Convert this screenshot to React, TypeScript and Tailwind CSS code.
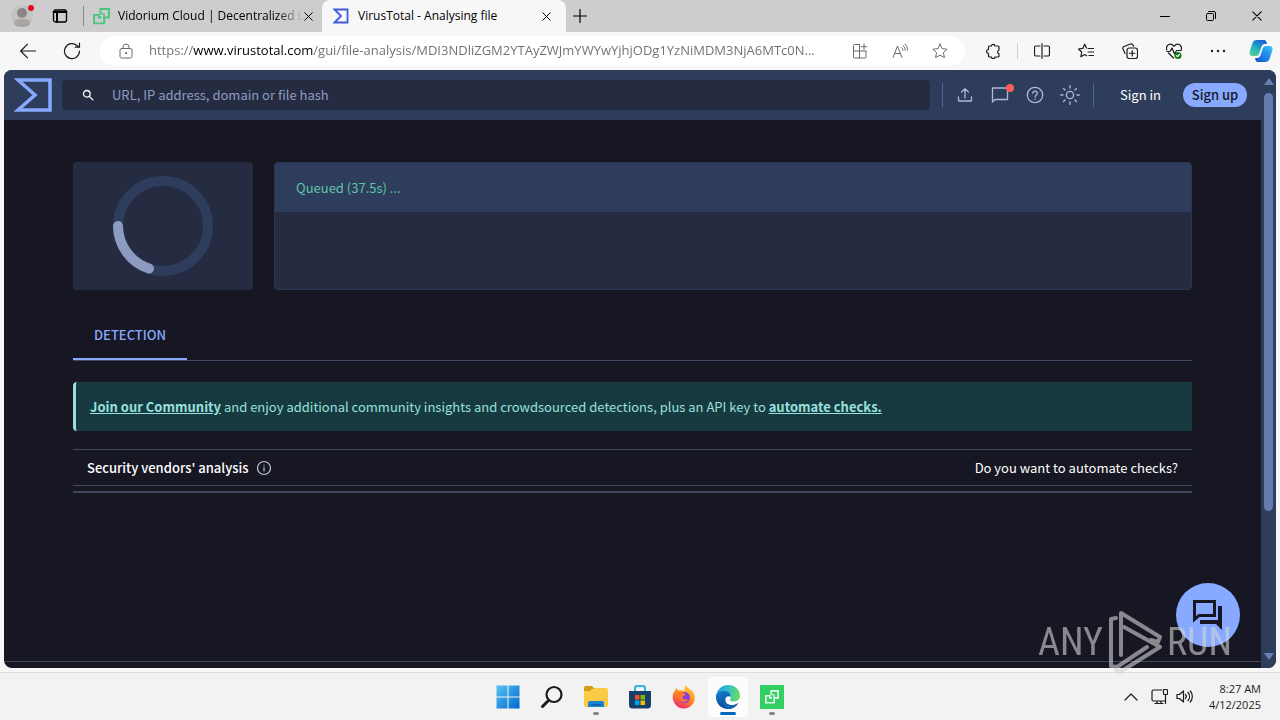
import { useState } from 'react'
import type { ReactNode } from 'react'

const ADDRESS =
  'https://www.virustotal.com/gui/file-analysis/MDI3NDliZGM2YTAyZWJmYWYwYjhjODg1YzNiMDM3NjA6MTc0N...'

type IconProps = { size?: number; box?: number; width?: number; className?: string; children: ReactNode }

function Icon({ size = 16, box = 16, width = 1, className = '', children }: IconProps) {
  return (
    <svg
      width={size}
      height={size}
      viewBox={`0 0 ${box} ${box}`}
      fill="none"
      stroke="currentColor"
      strokeWidth={width}
      strokeLinecap="round"
      strokeLinejoin="round"
      className={`shrink-0 ${className}`}
      aria-hidden="true"
    >
      {children}
    </svg>
  )
}

function CloseIcon({ size = 10 }: { size?: number }) {
  return (
    <Icon size={size} box={10} width={1.1}>
      <path d="M.8.8l8.4 8.4M9.2.8L.8 9.2" />
    </Icon>
  )
}

function VidoriumMark({ size, className }: { size: number; className: string }) {
  return (
    <svg width={size} height={size} viewBox="0 0 16 16" fill="none" stroke="currentColor" strokeWidth="1.800" className={`shrink-0 ${className}`} aria-hidden="true">
      <path d="M7 5.500V1h8v8h-4.500v5.500H1v-8h4.500V9H8" />
      <path d="M7 5.500h3.500V9" strokeWidth="1.200" />
    </svg>
  )
}

function TabStrip() {
  return (
    <div className="flex h-8 bg-[#cdcdcd] text-xs text-black">
      <button aria-label="Profile" className="flex w-11 items-center justify-center">
        <svg width="24" height="24" viewBox="0 0 24 24" aria-hidden="true">
          <circle cx="12" cy="12" r="11" fill="#c3c3c3" />
          <circle cx="12" cy="9" r="5" fill="#8b8683" />
          <path d="M4 19c0-3 3-4 8-4s8 1 8 4-4 4-8 4-8-1-8-4z" fill="#aaa5a2" />
          <circle cx="21" cy="4" r="3" fill="#e00b1c" />
        </svg>
      </button>
      <button aria-label="Tab actions" className="flex w-8 items-center justify-center">
        <Icon width={1.300}>
          <rect x="1.500" y="2" width="13" height="12" rx="2" />
          <path d="M1.500 4h13M5 4.500V14" strokeWidth="2" />
        </Icon>
      </button>
      <div className="ml-[7px] flex w-[239px] items-center bg-[linear-gradient(#888,#888)] bg-[length:1px_20px] bg-left bg-no-repeat pr-2.5 pl-2.5">
        <VidoriumMark size={17} className="text-[#48c67f]" />
        <span className="ml-2 whitespace-nowrap font-['Open_Sans',sans-serif] [mask-image:linear-gradient(to_right,black_85%,transparent)]">
          Vidorium Cloud | Decentralized L
        </span>
        <button aria-label="Close tab" className="ml-auto"><CloseIcon size={9} /></button>
      </div>
      <div className="flex w-[244px] items-center rounded-t-lg bg-[#f7f7f7] pr-[15px] pl-[11px]">
        <svg width="16" height="16" viewBox="0 0 16 16" fill="none" stroke="#3b5bdb" strokeWidth="1.800" className="shrink-0" aria-hidden="true">
          <path d="M1.500 1.500h13v13h-13L8 8z" />
        </svg>
        <span className="ml-[9px] flex-1 whitespace-nowrap font-['Open_Sans',sans-serif]">VirusTotal - Analysing file</span>
        <button aria-label="Close tab"><CloseIcon size={9} /></button>
      </div>
      <button aria-label="New tab" className="flex w-7 items-center justify-center">
        <Icon size={14} box={14} width={1.200}><path d="M7 .5v13M.5 7h13" /></Icon>
      </button>
      <div className="ml-auto flex">
        <button aria-label="Minimize" className="flex w-[46px] items-center justify-center">
          <Icon size={10} box={10}><path d="M0 5.500h10" /></Icon>
        </button>
        <button aria-label="Restore" className="flex w-[46px] items-center justify-center">
          <Icon size={10} box={10}>
            <rect x=".5" y="2.500" width="7" height="7" rx="1" />
            <path d="M2.500.5H8A1.500 1.500 0 0 1 9.500 2v5.500" />
          </Icon>
        </button>
        <button aria-label="Close" className="flex w-[46px] items-center justify-center"><CloseIcon /></button>
      </div>
    </div>
  )
}

function Toolbar() {
  const [address, setAddress] = useState(ADDRESS)
  return (
    <div className="flex h-[38px] items-center text-[#1b1b1b]">
      <button aria-label="Back" className="ml-1 flex w-12 justify-center">
        <Icon width={1.200}><path d="M15.500 8H.7M7.500 1.200L.7 8l6.800 6.800" /></Icon>
      </button>
      <button aria-label="Refresh" className="flex w-10 justify-center">
        <Icon size={18} box={18} width={1.200}>
          <path d="M16.500 9A7.500 7.500 0 1 1 14 3.500l2 1.500M16.500 1v4.200h-4.200" />
        </Icon>
      </button>
      <div className="ml-2 flex h-[30px] flex-1 items-center rounded-full bg-white pl-[18px] text-[#6b6b6b]">
        <Icon>
          <rect x="2" y="5.500" width="12" height="9.500" rx="1.500" />
          <path d="M5 5.500V4a3 3 0 0 1 6 0v1.500" />
          <circle cx="8" cy="10" r=".6" fill="currentColor" />
        </Icon>
        <input
          aria-label="Address"
          value={address}
          onChange={(e) => setAddress(e.target.value)}
          className="ml-[15px] min-w-0 flex-1 bg-[linear-gradient(to_right,#6e6e6e_44px,#000_44px,#000_164px,#6e6e6e_164px)] bg-clip-text font-['Open_Sans',sans-serif] text-[13px] text-transparent caret-black outline-none"
        />
        <button aria-label="Install app" className="flex w-10 justify-center">
          <Icon>
            <path d="M7.500 1.500h-5a1 1 0 0 0-1 1V14a1 1 0 0 0 1 1H13a1 1 0 0 0 1-1V8.500M7.500 1.500V15M1.500 8H14M12 1v5.500M9.300 3.700h5.500" />
          </Icon>
        </button>
        <button aria-label="Read aloud" className="flex w-10 justify-center">
          <Icon><path d="M1 14.500L5.500 3l4.500 11.500M2.600 10.500h5.800M9.500 4.500c1 .8 1.300 1.800 1.300 3M11 2.500c1.600 1.200 2.200 2.900 2.200 4.800M12.800 1c1.800 1.500 2.700 3.500 2.700 6" /></Icon>
        </button>
        <button aria-label="Add to favourites" className="mr-[5px] flex w-10 justify-center">
          <Icon><path d="M8 1l2.100 4.600 5 .6-3.700 3.400 1 5L8 12.100l-4.400 2.500 1-5L.9 6.200l5-.6z" /></Icon>
        </button>
      </div>
      <button aria-label="Extensions" className="ml-2 flex w-10 justify-center">
        <Icon width={1.200}>
          <path d="M4.500 3h2a1.700 1.700 0 0 1 3.400 0H13a1 1 0 0 1 1 1v3a2 2 0 0 0 0 3.800V13a1 1 0 0 1-1 1H9.900a1.700 1.700 0 0 1-3.400 0h-2a1 1 0 0 1-1-1v-2.500a2 2 0 0 1 0-4V4a1 1 0 0 1 1-1z" />
        </Icon>
      </button>
      <span className="ml-1 h-4 w-px bg-[#cfcfcf]" />
      <div className="ml-1 flex items-center gap-1">
        <button aria-label="Split screen" className="flex w-10 justify-center">
          <Icon width={1.200}>
            <path d="M6 3H2a1.500 1.500 0 0 0-1.500 1.500v7A1.500 1.500 0 0 0 2 13h4M10 3h4a1.500 1.500 0 0 1 1.500 1.500v7A1.500 1.500 0 0 1 14 13h-4M8 .7v14.600" />
          </Icon>
        </button>
        <button aria-label="Favourites" className="flex w-10 justify-center">
          <Icon width={1.200}>
            <path d="M8.500 5L6.700 1.200 4.800 5.400l-4.300.6 3.200 3-.8 4.800 3.800-2.300 2 1.200M10 5.500h6M10 9h6M11 12.500h5" />
          </Icon>
        </button>
        <button aria-label="Collections" className="flex w-10 justify-center">
          <Icon width={1.200}>
            <path d="M3 10.500L1 6a2 2 0 0 1 1-2.500L8.500 1A2 2 0 0 1 11 2l.6 1.200" />
            <rect x="5" y="5" width="10.500" height="10.500" rx="2.200" />
            <path d="M10.250 7.500v5.500M7.500 10.250H13" />
          </Icon>
        </button>
        <button aria-label="Browser essentials" className="flex w-10 justify-center">
          <Icon width={1.200}>
            <path d="M.8 7C-.4 3.500 2 1.200 4.300 1.200 6 1.200 7 2 8 3.300 9 2 10 1.200 11.700 1.200 14 1.200 16.400 3.500 15.200 7M2.500 10l5 5" />
            <path d="M1 8.500h3l2-3.500 2.500 6 2-3.500h4.500" />
            <circle cx="12" cy="12.500" r="3.500" fill="#107c10" stroke="none" />
            <path d="M10.500 12.700l1 1 2-2.300" stroke="white" />
          </Icon>
        </button>
        <button aria-label="Settings and more" className="flex w-10 justify-center">
          <Icon><g fill="currentColor" stroke="none"><circle cx="2" cy="8" r="1.200" /><circle cx="8" cy="8" r="1.200" /><circle cx="14" cy="8" r="1.200" /></g></Icon>
        </button>
        <button aria-label="Copilot" className="mx-1.5 flex justify-center">
          <svg width="26" height="24" viewBox="0 0 24 24" aria-hidden="true">
            <defs>
              <linearGradient id="cop1" x1="0" y1="1" x2=".6" y2="0"><stop stopColor="#62d58c" /><stop offset=".5" stopColor="#24b5bf" /><stop offset="1" stopColor="#1b63d8" /></linearGradient>
              <linearGradient id="cop2" x1="0" y1="1" x2="1" y2="0"><stop stopColor="#1453c6" /><stop offset=".6" stopColor="#2392f0" /><stop offset="1" stopColor="#3fd0f0" /></linearGradient>
            </defs>
            <path d="M8 1h7c2 0 2.500 1.500 3 4h-2c-2 0-3 1-3.600 3l-2 6c-.6 2-1.600 3-3.400 3H3.500C1 17 0 15 .7 12.500L3.500 4C4.200 2 5.500 1 8 1z" fill="url(#cop1)" />
            <path d="M16 23H9c-2 0-2.500-1.500-3-4h2c2 0 3-1 3.600-3l2-6c.6-2 1.600-3 3.400-3h3.500c2.500 0 3.500 2 2.800 4.500L20.500 20c-.7 2-2 3-4.500 3z" fill="url(#cop2)" />
          </svg>
        </button>
      </div>
    </div>
  )
}

function Header() {
  const [query, setQuery] = useState('')
  return (
    <header className="flex h-[50px] items-center bg-[#2f3d5c] pr-3.5 pl-2.5 text-[13px] text-[#a9b8dc]">
      <a href="#" aria-label="VirusTotal home">
        <svg width="38" height="34" viewBox="0 0 38 34" fill="none" stroke="#87a9ff" strokeWidth="3.500" aria-hidden="true">
          <path d="M4 2h32v30H4l17-15z" />
        </svg>
      </a>
      <label className="ml-2.5 flex h-[30px] flex-1 items-center rounded bg-[#252b41] pl-5">
        <Icon size={12} box={12} width={1.300} className="text-white">
          <circle cx="4.800" cy="4.800" r="3.300" />
          <path d="M7.400 7.400l3.500 3.500" />
        </Icon>
        <input
          aria-label="Search"
          value={query}
          onChange={(e) => setQuery(e.target.value)}
          placeholder="URL, IP address, domain or file hash"
          className="ml-[18px] min-w-0 flex-1 bg-transparent outline-none placeholder:text-[#8f9cc0]"
        />
      </label>
      <span className="ml-3 h-6 w-px bg-[#55658f]" />
      <button aria-label="Upload file" className="ml-[5px] flex w-[35px] justify-center">
        <Icon width={1.300}><path d="M1.500 10v4h13v-4M8 11V2M4.500 5L8 1.700 11.500 5" /></Icon>
      </button>
      <button aria-label="Notifications" className="relative flex w-[35px] justify-center">
        <Icon size={18} box={18} width={1.300}><path d="M1.500 2h15v11.500H4L1.500 16z" /></Icon>
        <span className="absolute -top-0.5 right-1 size-2 rounded-full bg-[#ff5f52]" />
      </button>
      <button aria-label="Help" className="flex w-[35px] justify-center">
        <Icon size={18} box={18} width={1.300}>
          <circle cx="9" cy="9" r="7.700" />
          <path d="M6.800 7.300c0-3 4.500-3 4.500 0 0 1.700-2.200 1.700-2.200 3.600M9.100 13v.2" />
        </Icon>
      </button>
      <button aria-label="Toggle theme" className="flex w-[35px] justify-center">
        <Icon size={20} box={20} width={1.400}>
          <circle cx="10" cy="10" r="3.600" />
          <path d="M10 .8v2.200M10 17v2.200M.8 10H3M17 10h2.200M3.600 3.600L5 5M15 15l1.400 1.400M3.600 16.400L5 15M15 5l1.400-1.400" />
        </Icon>
      </button>
      <span className="ml-[5px] h-6 w-px bg-[#55658f]" />
      <a href="#signin" className="ml-[26px] text-white">Sign in</a>
      <a href="#signup" className="ml-[22px] flex h-6 w-16 items-center justify-center rounded-full bg-[#87a9ff] font-medium whitespace-nowrap text-[#161722]">
        Sign up
      </a>
    </header>
  )
}

function Analysis() {
  return (
    <main className="px-[69px] pt-[42px] text-[13px]">
      <div className="flex gap-[21px]">
        <div className="flex h-32 w-[180px] items-center justify-center rounded bg-[#252b41]">
          <svg width="100" height="100" viewBox="0 0 100 100" fill="none" strokeWidth="10" role="img" aria-label="Analysis in progress">
            <circle cx="50" cy="50" r="45" stroke="#2f3d5c" />
            <path d="M5 50A45 45 0 0 0 36 92.500" stroke="#8d9bc2" strokeLinecap="round" />
          </svg>
        </div>
        <div className="flex-1 overflow-hidden rounded border border-[#2b3450] bg-[#252b41]">
          <div className="flex h-[49px] items-center bg-[#2f3d5c] px-[21px] text-[#5cc5a7]">Queued (37.5s) ...</div>
        </div>
      </div>

      <div className="mt-[21px] flex h-[50px] border-b border-[#43465e]">
        <button className="border-b-2 border-[#87a9ff] px-[21px] font-medium text-[#87a9ff]">
          DETECTION
        </button>
      </div>

      <p className="mt-[21px] flex h-[49px] items-center rounded-l border-l-[3px] border-[#98e0dd] bg-[#173a40] px-3.5 text-[#98e0dd]">
        <span>
          <a href="#join" className="font-bold underline">Join our Community</a> and enjoy additional community insights and
          crowdsourced detections, plus an API key to <a href="#api" className="font-bold underline">automate checks.</a>
        </span>
      </p>

      <div className="mt-[18px] flex h-[37px] items-center border-y border-[#43465e] px-3.5 text-white">
        <h2 className="font-medium">Security vendors' analysis</h2>
        <Icon className="ml-2 text-[#c6c8d2]" width={1.200}>
          <circle cx="8" cy="8" r="6.500" />
          <path d="M8 7.500V11M8 5v.2" />
        </Icon>
        <a href="#automate" className="ml-auto">Do you want to automate checks?</a>
      </div>
      <div className="mt-[5px] h-0.5 bg-[#43465e]" />
    </main>
  )
}

function Watermark() {
  return (
    <div className="pointer-events-none absolute right-11 -bottom-1.5 flex items-center font-['Liberation_Sans_Narrow','Roboto_Condensed','Liberation_Sans',sans-serif] text-[38px] leading-none text-[#d5d5d5] opacity-60">
      <span>ANY</span>
      <svg width="56" height="64" viewBox="0 0 56 64" fill="none" stroke="currentColor" strokeWidth="4" strokeLinejoin="round" strokeLinecap="round" className="mx-1" aria-hidden="true">
        <path d="M9 8L4 9v47l6 1 30-20M14 45V3l39 24-2 5-7-2M17 17l36 20-40 25-4-2" />
      </svg>
      <span>RUN</span>
    </div>
  )
}

function TaskButton({ label, state = '', children }: { label: string; state?: string; children: ReactNode }) {
  return (
    <button aria-label={label} className="flex w-11 justify-center">
      <span className={`relative flex size-10 items-center justify-center rounded ${state === 'active' ? 'bg-white/80' : ''}`}>
        {children}
        {state === 'active' && <span className="absolute bottom-0.5 h-[3px] w-4 rounded-full bg-[#0067c0]" />}
        {state === 'open' && <span className="absolute bottom-0.5 h-[3px] w-1.5 rounded-full bg-[#868686]" />}
      </span>
    </button>
  )
}

function Taskbar() {
  return (
    <footer className="grid h-12 grid-cols-[1fr_auto_1fr] items-center border-t border-[#dcdcdc] bg-[#f2f2f2] text-[#1b1b1b]">
      <div />
      <nav aria-label="Taskbar" className="flex">
        <TaskButton label="Start">
          <svg width="24" height="24" viewBox="0 0 24 24" aria-hidden="true">
            <defs><linearGradient id="win" x1="0" y1="0" x2="1" y2="1"><stop stopColor="#56c5f5" /><stop offset="1" stopColor="#0066cc" /></linearGradient></defs>
            <path d="M.5.5h11v11H.5zM12.500.5h11v11h-11zM.5 12.500h11v11H.5zM12.500 12.500h11v11h-11z" fill="url(#win)" />
          </svg>
        </TaskButton>
        <TaskButton label="Search">
          <Icon size={24} box={24} width={2.200}><circle cx="14" cy="9.500" r="7.500" /><path d="M8.500 15.500L2.500 21.500" strokeWidth="3" /></Icon>
        </TaskButton>
        <TaskButton label="File Explorer" state="open">
          <svg width="26" height="24" viewBox="0 0 26 24" aria-hidden="true">
            <path d="M1 3a2 2 0 0 1 2-2h6l3 3h-3l-2 3H1z" fill="#d69a14" />
            <path d="M1 6h7l3-3h12a2 2 0 0 1 2 2v15a2 2 0 0 1-2 2H3a2 2 0 0 1-2-2z" fill="#fccb46" />
            <path d="M5 22v-4a2 2 0 0 1 2-2h12a2 2 0 0 1 2 2v4z" fill="#1683d3" />
            <path d="M8 19h10v1.500H8z" fill="#0b5ca8" />
          </svg>
        </TaskButton>
        <TaskButton label="Microsoft Store">
          <svg width="24" height="24" viewBox="0 0 24 24" aria-hidden="true">
            <path d="M7 7V3a2 2 0 0 1 2-2h6a2 2 0 0 1 2 2v4" fill="none" stroke="#2cb0ee" strokeWidth="2" />
            <path d="M1 6h22v14a3.500 3.500 0 0 1-3.500 3.500h-15A3.500 3.500 0 0 1 1 20z" fill="#173f6b" />
            <path d="M7 10h4.500v4.500H7z" fill="#f25022" /><path d="M12.500 10H17v4.500h-4.500z" fill="#7fba00" />
            <path d="M7 15.500h4.500V20H7z" fill="#00a4ef" /><path d="M12.500 15.500H17V20h-4.500z" fill="#ffb900" />
          </svg>
        </TaskButton>
        <TaskButton label="Firefox">
          <svg width="24" height="24" viewBox="0 0 24 24" aria-hidden="true">
            <defs><linearGradient id="fox" x1=".8" y1="0" x2=".3" y2="1"><stop stopColor="#ffd43a" /><stop offset=".5" stopColor="#ff8a20" /><stop offset="1" stopColor="#f0286e" /></linearGradient></defs>
            <path d="M3 5.500L4.500 3l1.500 2.500 3-.5L12.500 6C12 3.500 13 1.500 14.500.5 15 3 19 4.500 21 7c4.500 7-.5 16-8.500 16.500S-1.500 15 1.500 8z" fill="url(#fox)" />
            <circle cx="12.500" cy="12.500" r="5.500" fill="#8a3fe0" />
            <path d="M5 8c2-1.500 5-1 7 .5 2 .2 2 2-1 2.500-1 1.500-.5 3 1.500 3.500 1.500.3 2.500-.5 3.500-.2-1 3-6 3.700-8.500.5C6 13 6.500 10 5 8z" fill="#ff7a24" />
          </svg>
        </TaskButton>
        <TaskButton label="Microsoft Edge" state="active">
          <svg width="24" height="24" viewBox="0 0 24 24" aria-hidden="true">
            <defs>
              <linearGradient id="edge1" x1="0" y1=".3" x2="1" y2=".5"><stop stopColor="#1c9de2" /><stop offset=".5" stopColor="#35c1c9" /><stop offset="1" stopColor="#6bdc5a" /></linearGradient>
              <linearGradient id="edge2" x1="0" y1="0" x2=".6" y2="1"><stop stopColor="#1681d2" /><stop offset="1" stopColor="#0b3f8e" /></linearGradient>
            </defs>
            <path d="M0 12C.3 5 5.500 0 12 0c7 0 12 5 12 10.500 0 4-3 6-6.500 6-3 0-4-1-3.300-2 2-3-1-6.500-5-6C4.500 9 1 11 0 15z" fill="url(#edge1)" />
            <path d="M0 12c0-4 4-6 8-6 5 0 7 3 6.300 6-2.300-2-5.500.5-5 3.500.6 4.500 7 6.500 13 2.500C20 22 16 24 12 24 5 24 0 18.500 0 12z" fill="url(#edge2)" />
            <path d="M9.300 15.500c.6 4.500 7 6.500 13 2.500C20 22 16 24 12 24c-4-1.500-6.500-6.500-2.700-12-.3 1-.2 2.500 0 3.500z" fill="#1465b8" />
          </svg>
        </TaskButton>
        <TaskButton label="Vidorium" state="open">
          <span className="flex size-6 items-center justify-center bg-[#32cf62]"><VidoriumMark size={14} className="text-white/90" /></span>
        </TaskButton>
      </nav>
      <div className="flex items-center justify-end pr-[19px]">
        <button aria-label="Show hidden icons">
          <Icon width={1.200}><path d="M2 11l6-6 6 6" /></Icon>
        </button>
        <button aria-label="Network and volume" className="ml-3 flex gap-2">
          <Icon size={17} box={17} width={1.200}>
            <path d="M11 2H2.500A1.500 1.500 0 0 0 1 3.500v8A1.500 1.500 0 0 0 2.500 13H14M6 13v2.500M10 13v2.500M4 15.500h8M14.500 6.500V15.500" />
            <rect x="12.500" y="1.500" width="4" height="5" rx="1" />
          </Icon>
          <Icon size={17} box={17} width={1.200}>
            <path d="M1 6.500h2.500L7.500 3v11L3.500 10.500H1zM9.500 6.500c1 1.200 1 2.800 0 4M12 4.500c2 2.300 2 5.700 0 8M14.300 3c2.700 3 2.700 8 0 11" />
          </Icon>
        </button>
        <time dateTime="2025-04-12T08:27" className="ml-4 text-right font-['Open_Sans',sans-serif] text-[11px] leading-4">
          8:27 AM<br />4/12/2025
        </time>
      </div>
    </footer>
  )
}

export default function App() {
  return (
    <div className="flex h-screen flex-col overflow-hidden bg-[#f7f7f7]">
      <TabStrip />
      <Toolbar />
      <div className="relative mx-1 mb-1 flex min-h-0 flex-1">
        <div className="flex min-w-0 flex-1 overflow-hidden rounded-lg bg-[#161722] font-['Noto_Sans_CJK_SC',sans-serif]">
          <div className="flex min-w-0 flex-1 flex-col">
            <Header />
            <Analysis />
            <div className="mt-auto mb-1.5 h-px bg-[#43465e]" />
          </div>
          <div className="flex w-[15px] flex-col items-center bg-[#2f3d5c] py-2">
            <svg width="10" height="7" viewBox="0 0 10 7" fill="#6b7fb3" aria-hidden="true"><path d="M5 0l5 7H0z" /></svg>
            <div className="mt-2 w-[9px] flex-[417] rounded-full bg-[#667bad]" />
            <div className="flex-[142]" />
            <svg width="10" height="7" viewBox="0 0 10 7" fill="#6b7fb3" aria-hidden="true"><path d="M5 7l5-7H0z" /></svg>
          </div>
        </div>
        <button aria-label="Open chat" className="absolute right-9 bottom-[21px] flex size-16 items-center justify-center rounded-full bg-[#87a9ff] text-[#161722]">
          <svg width="32" height="32" viewBox="0 0 32 32" fill="none" stroke="currentColor" strokeWidth="3" aria-hidden="true">
            <path d="M2.500 2.500h20v14H7l-4.500 4z" />
            <path d="M26 7h4v24l-6-6H8v-4h18z" fill="currentColor" stroke="none" />
          </svg>
        </button>
        <Watermark />
      </div>
      <Taskbar />
    </div>
  )
}
